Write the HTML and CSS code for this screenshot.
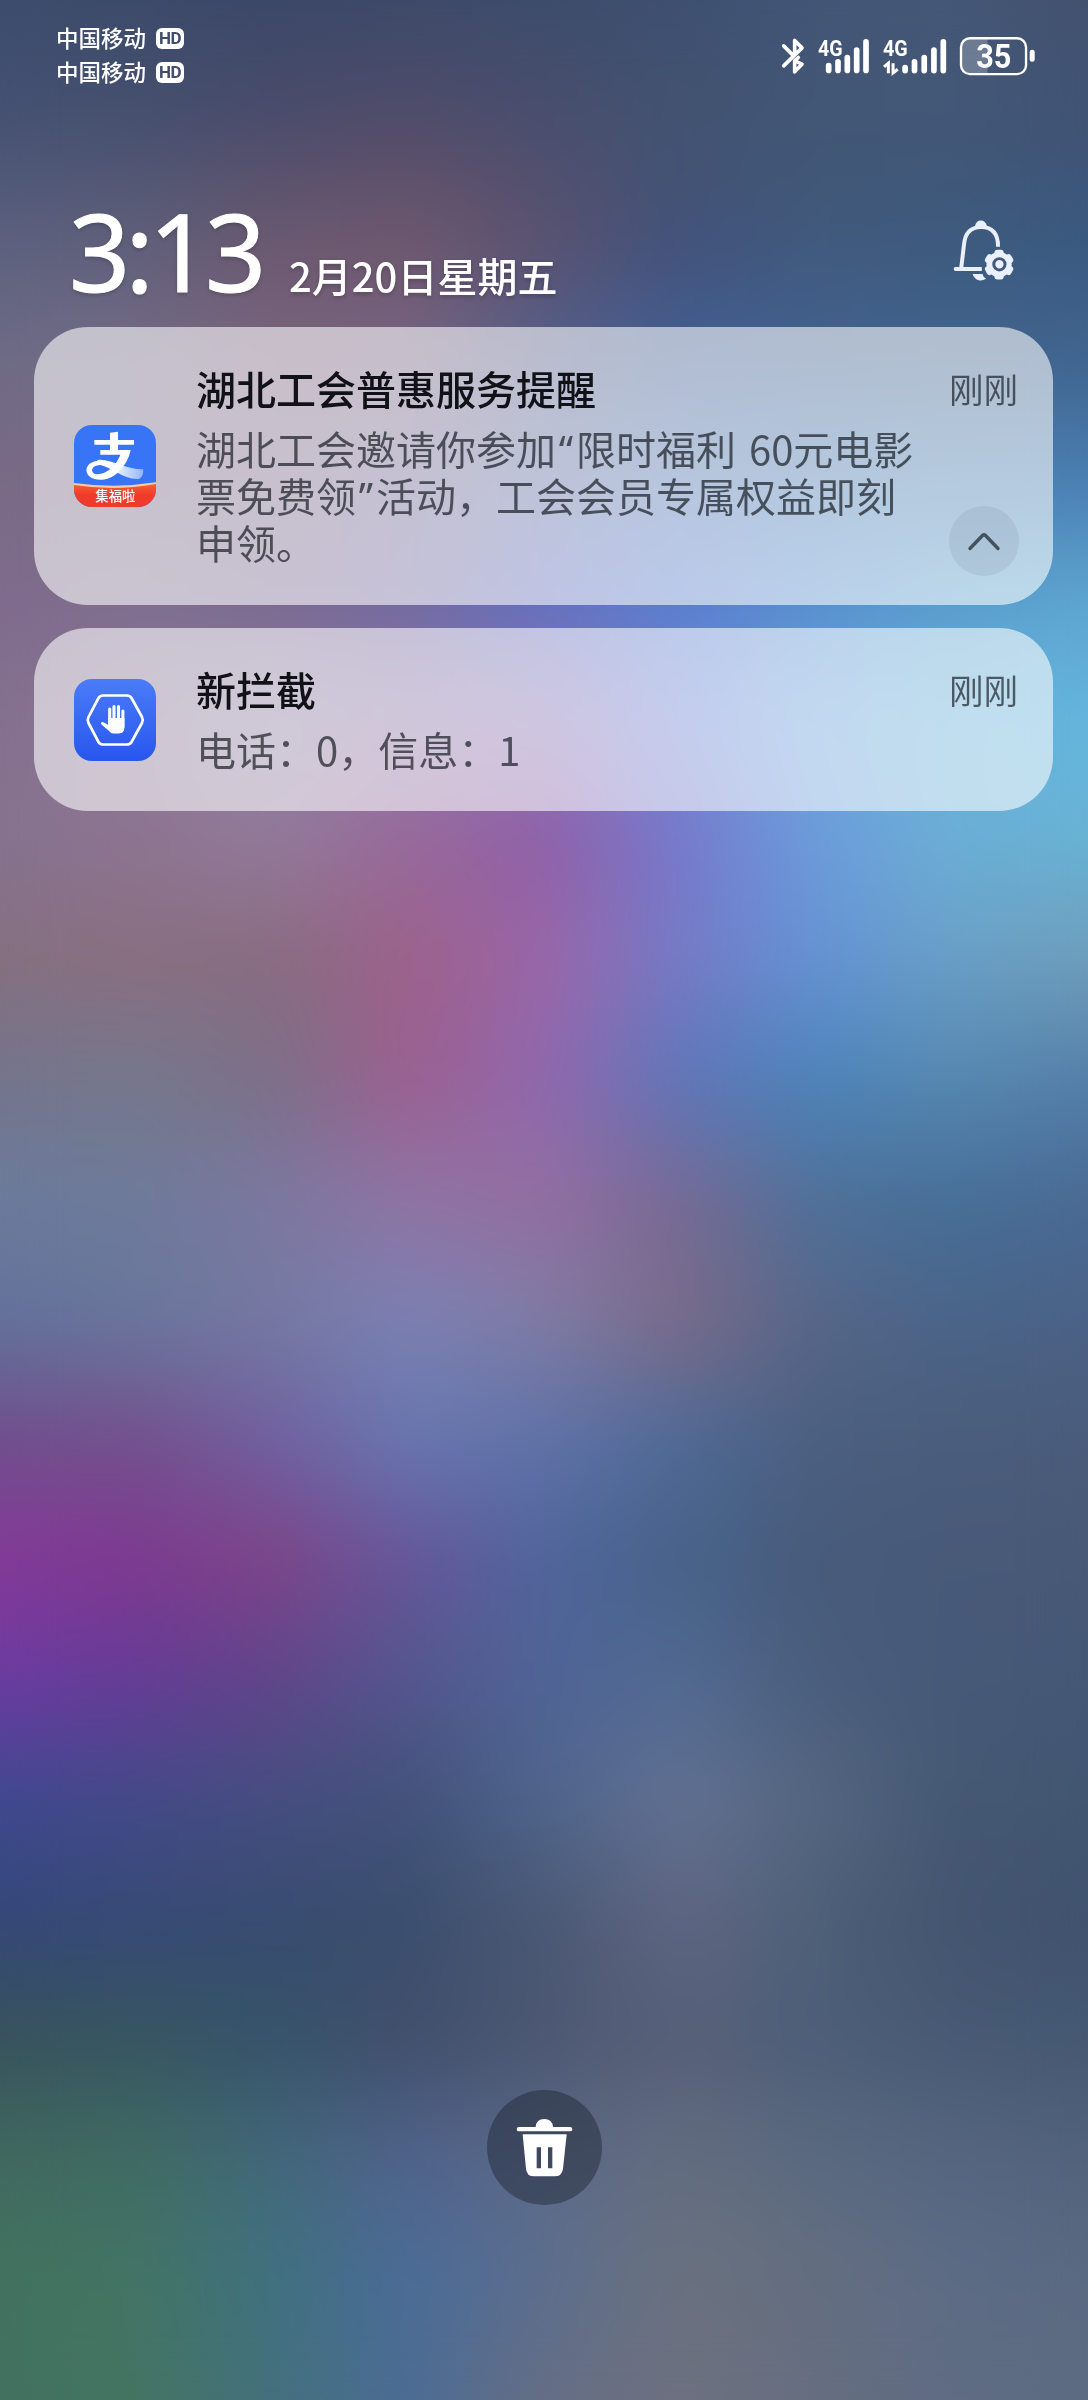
FILE: index.html
```html
<!DOCTYPE html>
<html lang="zh-CN">
<head>
<meta charset="utf-8">
<title>通知中心</title>
<link rel="stylesheet" href="styles.css">
</head>
<body>
<div class="screen">
  <div class="wallpaper" aria-hidden="true">
    <div class="band band-1"></div><div class="band band-2"></div><div class="band band-3"></div><div class="band band-4"></div>
    <div class="band band-5"></div><div class="band band-6"></div><div class="band band-7"></div><div class="band band-8"></div>
    <div class="band band-9"></div><div class="band band-10"></div><div class="band band-11"></div><div class="band band-12"></div>
    <div class="band band-13"></div><div class="band band-14"></div><div class="band band-15"></div><div class="band band-16"></div>
    <div class="band band-17"></div><div class="band band-18"></div><div class="band band-19"></div><div class="band band-20"></div>
  </div>

  <header class="status-bar">
    <div class="carriers">
      <div class="carrier">中国移动<span class="hd">HD</span></div>
      <div class="carrier">中国移动<span class="hd">HD</span></div>
    </div>
    <div class="indicators">
      <svg class="bluetooth" viewBox="60 45 72 125">
        <path d="M68 77 L98 107 M68 137 L123 83 L101 61 V104 M101 122 L123 132 L101 155 V122 L112 112" fill="none" stroke="#fff" stroke-width="11" stroke-linecap="round" stroke-linejoin="round"/>
      </svg>
      <svg class="signal-a" viewBox="165 45 165 125">
        <text x="171" y="107" class="net" textLength="74" lengthAdjust="spacingAndGlyphs">4G</text>
        <g stroke="#fff" stroke-width="17" stroke-linecap="round">
          <path d="M203 136V151M231 125V151M259 112V151M287 90V151M315 65V151"/>
        </g>
      </svg>
      <svg class="signal-b" viewBox="360 45 200 125">
        <text x="366" y="107" class="net" textLength="74" lengthAdjust="spacingAndGlyphs">4G</text>
        <path d="M369 140L382 129V159M396 129V158L410 147" fill="none" stroke="#fff" stroke-width="9"/>
        <g stroke="#fff" stroke-width="17" stroke-linecap="round">
          <path d="M432 142V151M460 125V151M489 112V151M518 90V151M546 65V151"/>
        </g>
      </svg>
      <svg class="battery" viewBox="594 45 232 125">
        <path d="M680 54H624Q600 54 600 80V136Q600 162 624 162H680Z" fill="#fff" fill-opacity=".22"/>
        <rect x="600" y="54" width="196" height="108" rx="27" fill="none" stroke="#fff" stroke-width="7"/>
        <rect x="807" y="89" width="15" height="36" rx="7" fill="#fff"/>
        <text x="699" y="143" class="percent" text-anchor="middle" textLength="106" lengthAdjust="spacingAndGlyphs">35</text>
      </svg>
    </div>
  </header>

  <section class="clock">
    <span class="time">3:13</span>
    <span class="date">2月20日星期五</span>
    <svg class="bell" viewBox="65 55 190 195">
      <path d="M76 208H155M93 204L101 136Q105 82 153 82Q204 82 204 141" fill="none" stroke="#e9f0fb" stroke-width="12" stroke-linecap="butt"/>
      <circle cx="76" cy="208" r="6" fill="#e9f0fb"/>
      <path d="M134 80Q138 62 152 62Q166 62 171 80ZM127 223H157Q159 233 168 238Q158 244 148 243Q132 239 127 223Z" fill="#e9f0fb"/>
      <g fill="#e9f0fb">
        <circle cx="207" cy="195" r="38"/>
        <rect x="193" y="150" width="28" height="90" rx="9"/>
        <rect x="193" y="150" width="28" height="90" rx="9" transform="rotate(60 207 195)"/>
        <rect x="193" y="150" width="28" height="90" rx="9" transform="rotate(120 207 195)"/>
      </g>
      <circle cx="208" cy="194" r="17" fill="none" stroke="#41597f" stroke-width="9"/>
    </svg>
  </section>

  <main class="notifications">
    <article class="card card-long">
      <svg class="app-icon" viewBox="42 45 246 246">
        <defs>
          <clipPath id="tile"><rect x="42" y="45" width="246" height="246" rx="54"/></clipPath>
          <linearGradient id="tail" x1="150" x2="252" y1="0" y2="0" gradientUnits="userSpaceOnUse"><stop offset="0" stop-color="#fff"/><stop offset="1" stop-color="#8fb4fb"/></linearGradient>
          <linearGradient id="ribbon" x1="0" x2="0" y1="0" y2="1"><stop offset="0" stop-color="#f4672e"/><stop offset=".5" stop-color="#f03a2c"/></linearGradient>
        </defs>
        <g clip-path="url(#tile)">
          <rect x="42" y="45" width="246" height="246" fill="#3875f6"/>
          <path d="M42 221Q165 241 288 218V291H42Z" fill="url(#ribbon)"/>
          <path d="M42 219Q165 236 288 217V222Q165 244 42 225Z" fill="#fbc9a0"/>
          <path d="M112 150C150 144 190 178 250 178Q250 202 236 207C190 210 156 170 112 162Z" fill="url(#tail)"/>
          <path d="M103 90H222V104H103ZM150 68L174 65V128H150Z" fill="#fff"/>
          <path d="M121 120H212Q205 158 173 188C150 208 123 213 103 207C76 199 72 173 91 160C108 149 132 151 147 159L139 168C122 162 106 165 99 173C92 182 98 192 112 193C143 192 171 162 181 134H121Z" fill="#fff"/>
        </g>
        <text x="166" y="274" class="ribbon-label" text-anchor="middle">集福啦</text>
      </svg>
      <div class="content">
        <h2>湖北工会普惠服务提醒</h2>
        <p>湖北工会邀请你参加<span class="quote">“</span>限时福利 60元电影<br>票免费领<span class="quote">”</span>活动，工会会员专属权益即刻<br>申领。</p>
      </div>
      <div class="side">
        <time>刚刚</time>
        <button class="collapse" aria-label="收起">
          <svg viewBox="0 0 70 70"><path d="M21 42.500L33.500 29.500Q35 28 36.500 29.500L49 42.500" fill="none" stroke="#43525f" stroke-width="3.400" stroke-linecap="round"/></svg>
        </button>
      </div>
    </article>

    <article class="card card-short">
      <svg class="app-icon" viewBox="0 0 82 82">
        <defs><linearGradient id="blue" x1="0" x2="0" y1="0" y2="1"><stop offset="0" stop-color="#4a7cf8"/><stop offset="1" stop-color="#2856ee"/></linearGradient></defs>
        <rect width="82" height="82" rx="18" fill="url(#blue)"/>
        <path d="M29 16.500H53Q56 16.500 57.500 19L68 38Q69.500 41 68 44L57.500 63Q56 65.500 53 65.500H29Q26 65.500 24.500 63L14.500 44Q13 41 14.500 38L24.500 19Q26 16.500 29 16.500Z" fill="none" stroke="#fff" stroke-width="2.700"/>
        <g stroke="#fff" stroke-width="3.100" stroke-linecap="round"><path d="M35.700 30V45M40 27.500V45M44.500 27.500V45M48.900 32V48"/></g>
        <path d="M34.200 39H50.400V48Q50.400 54.500 45 54.500H39.500Q37 54.500 35 52L27.500 45.500Q26.400 44 27.500 43.200Q29 42.500 34.200 46Z" fill="#fff"/>
      </svg>
      <div class="content">
        <h2>新拦截</h2>
        <p>电话：0，信息：1</p>
      </div>
      <div class="side"><time>刚刚</time></div>
    </article>
  </main>

  <button class="clear" aria-label="清除全部">
    <svg viewBox="48 59 345 345">
      <path d="M194 170Q196 146 220 146Q244 146 246 170H297Q304 170 304 176.500T297 183H144Q137 183 137 176.500T144 170ZM155 192H287L276 295Q273 318 250 318H190Q167 318 165 295ZM197 231V294H210V231ZM231 231V294H244V231Z" fill="#fff" fill-rule="evenodd"/>
    </svg>
  </button>
</div>
</body>
</html>
```
FILE: styles.css
```css
:root {
  --row-0: #3d4c6c, #3d4b6b, #3b4869, #3d4a6a, #3d4d6c, #3e5070, #445676, #465877, #42526f;
  --row-1: #465273, #46506f, #4b4c6b, #514c6a, #4a4e6e, #435371, #425675, #435777, #415374;
  --row-2: #5c617f, #5f5f7a, #6a5970, #6f586e, #5a5270, #42527a, #415a7c, #3d5a7d, #3a5a80;
  --row-3: #6e6c86, #756c86, #7c647e, #786482, #555f8a, #425f94, #426291, #42648e, #41658f;
  --row-4: #7a6a86, #796a86, #7a6788, #746a94, #6270a1, #5075ae, #497ab0, #4b7fb0, #4a7fb3;
  --row-5: #7f6b8c, #7f6f90, #7b6a90, #726aa0, #6370c0, #5a7ed0, #5890cf, #5b9fce, #5ea6d0;
  --row-6: #84718f, #8b7695, #8c80a3, #9078a8, #8c76b4, #7286d8, #6ca4dc, #68b0d8, #64b6de;
  --row-7: #86728f, #8d7591, #937a9a, #98699a, #9060a8, #7679cc, #6c9cdb, #6cafd6, #68b3d4;
  --row-8: #857080, #8a6f80, #886c80, #9d628a, #9a66a8, #757ac6, #6492d4, #699fc6, #6f9dba;
  --row-9: #74758c, #75788c, #7c7088, #9c6090, #9068ae, #5f76b8, #4c84ba, #5688b0, #547fa8;
  --row-10: #6b7b9c, #6e7b9b, #7b78a0, #8f74a4, #946ea2, #766a94, #4f7098, #466f98, #4a6a94;
  --row-11: #63719a, #69769c, #7579a2, #7b81b3, #7f7ca4, #7a6b89, #566688, #4a6488, #4b6286;
  --row-12: #704f8d, #74508c, #7060a0, #6877b0, #5f72a8, #4f6a96, #4b5f80, #4b5d7c, #4b5c7b;
  --row-13: #853a98, #7e3990, #7e4488, #66569a, #50659c, #466288, #485b7b, #485a78, #485977;
  --row-14: #6b3ca2, #653c96, #60458a, #54568e, #4f6496, #526a92, #4a5d7c, #465978, #455876;
  --row-15: #3f4990, #434a88, #454e80, #42527a, #4f658c, #627192, #546680, #455873, #425672;
  --row-16: #354878, #374a76, #384c70, #3b4e6e, #4a5874, #5f6682, #4e6078, #43556f, #40526f;
  --row-17: #38535c, #375560, #36536a, #414f6c, #4c5872, #575f78, #4d5e78, #475a74, #465972;
  --row-18: #41695f, #406c63, #42687a, #50638c, #5c6a88, #646d80, #5a6a80, #566680, #52637c;
  --row-19: #42735f, #437564, #407180, #4a6c98, #5c6e8e, #6a727e, #646e80, #5d6c86, #5b6a82;
  --row-20: #42725f, #447562, #44707c, #4c6c94, #666e84, #6e7080, #666e80, #5f6c82, #5d6b82;
}

* { box-sizing: border-box; }

body {
  margin: 0;
  font-family: "Noto Sans CJK SC", "Noto Sans", sans-serif;
}

h2, p { margin: 0; }

button {
  padding: 0;
  border: 0;
}

svg { display: block; }

.screen {
  position: relative;
  isolation: isolate;
  display: flex;
  flex-direction: column;
  width: 1088px;
  height: 2400px;
  overflow: hidden;
}

/* Wallpaper: colour rows cross-faded into each other, then softened */
.wallpaper {
  position: absolute;
  inset: 0;
  z-index: -1;
  display: grid;
  grid-template-rows: repeat(20, 1fr);
}

.wallpaper::after {
  content: "";
  position: absolute;
  inset: 0;
  backdrop-filter: blur(28px);
}

.band {
  display: grid;
  background: linear-gradient(90deg, var(--from));
}

.band::after {
  content: "";
  background: linear-gradient(90deg, var(--to));
  mask-image: linear-gradient(transparent, #000);
}

.band-1 { --from: var(--row-0); --to: var(--row-1); }
.band-2 { --from: var(--row-1); --to: var(--row-2); }
.band-3 { --from: var(--row-2); --to: var(--row-3); }
.band-4 { --from: var(--row-3); --to: var(--row-4); }
.band-5 { --from: var(--row-4); --to: var(--row-5); }
.band-6 { --from: var(--row-5); --to: var(--row-6); }
.band-7 { --from: var(--row-6); --to: var(--row-7); }
.band-8 { --from: var(--row-7); --to: var(--row-8); }
.band-9 { --from: var(--row-8); --to: var(--row-9); }
.band-10 { --from: var(--row-9); --to: var(--row-10); }
.band-11 { --from: var(--row-10); --to: var(--row-11); }
.band-12 { --from: var(--row-11); --to: var(--row-12); }
.band-13 { --from: var(--row-12); --to: var(--row-13); }
.band-14 { --from: var(--row-13); --to: var(--row-14); }
.band-15 { --from: var(--row-14); --to: var(--row-15); }
.band-16 { --from: var(--row-15); --to: var(--row-16); }
.band-17 { --from: var(--row-16); --to: var(--row-17); }
.band-18 { --from: var(--row-17); --to: var(--row-18); }
.band-19 { --from: var(--row-18); --to: var(--row-19); }
.band-20 { --from: var(--row-19); --to: var(--row-20); }

/* Status bar */
.status-bar {
  display: flex;
  justify-content: space-between;
  height: 192px;
  padding: 20px 52px 0 56px;
  color: #fff;
}

.carrier {
  display: flex;
  align-items: center;
  gap: 10px;
  height: 34px;
  font-size: 22.500px;
  font-weight: 500;
  line-height: 34px;
}

.hd {
  width: 28px;
  height: 21px;
  margin-top: 3px;
  border-radius: 6px;
  background: #fff;
  color: #434c69;
  font: 700 17px/21px Roboto, sans-serif;
  letter-spacing: -.4px;
  text-align: center;
}

.indicators {
  display: flex;
  height: 42px;
  margin-top: 15px;
}

.bluetooth { width: 24px; height: 42px; margin-right: 11px; }
.signal-a { width: 55px; height: 42px; margin-right: 10px; }
.signal-b { width: 67px; height: 42px; margin-right: 11px; }
.battery { width: 77px; height: 42px; }

.net {
  fill: #fff;
  font: 700 66px Roboto, sans-serif;
}

.percent {
  fill: #fff;
  font: 700 100px Roboto, sans-serif;
}

/* Clock row */
.clock {
  display: flex;
  align-items: baseline;
  height: 135px;
  padding: 0 73px 0 69px;
  color: #fff;
  text-shadow: 0 2px 4px rgba(0, 0, 0, .22);
}

.time {
  width: 220px;
  font-family: "Noto Sans", sans-serif;
  font-size: 107px;
  line-height: 118px;
  letter-spacing: -5px;
  -webkit-text-stroke: 1px #fff;
}

.date {
  flex: 1;
  font-size: 40px;
  font-weight: 500;
  line-height: 50px;
}

.bell {
  align-self: flex-start;
  width: 63px;
  height: 65px;
  margin-top: 26px;
}

/* Notifications */
.notifications {
  display: flex;
  flex-direction: column;
  gap: 23px;
  padding: 0 35px 0 34px;
}

.card {
  display: grid;
  grid-template-columns: 82px minmax(0, 1fr) 70px;
  column-gap: 40px;
  align-items: center;
  padding: 0 34px 0 40px;
  border-radius: 54px;
  background: rgba(255, 255, 255, .59);
}

.card-long { height: 278px; }
.card-short { height: 183px; }

.app-icon {
  width: 82px;
  height: 82px;
}

.ribbon-label {
  fill: #fff;
  font-size: 40px;
  font-weight: 500;
}

.content {
  align-self: start;
  padding-top: 32px;
}

h2 {
  color: #111217;
  font-size: 40px;
  font-weight: 500;
  line-height: 58px;
}

p {
  margin-top: 8px;
  color: rgba(17, 22, 30, .68);
  font-size: 40px;
  line-height: 47px;
  white-space: nowrap;
  word-spacing: 4px;
}

.quote {
  display: inline-block;
  width: 20px;
  font-family: "Noto Sans", sans-serif;
  line-height: 1;
  text-align: center;
}

.side {
  display: flex;
  flex-direction: column;
  align-self: stretch;
  justify-content: space-between;
  padding: 36px 0 29px;
}

time {
  color: rgba(17, 22, 30, .66);
  font-size: 34.500px;
  line-height: 50px;
}

.collapse {
  width: 70px;
  height: 70px;
  border-radius: 50%;
  background: rgba(90, 110, 130, .13);
}

.clear {
  width: 115px;
  height: 115px;
  margin: auto auto 195px;
  border-radius: 50%;
  background: rgba(24, 30, 42, .42);
}
```
